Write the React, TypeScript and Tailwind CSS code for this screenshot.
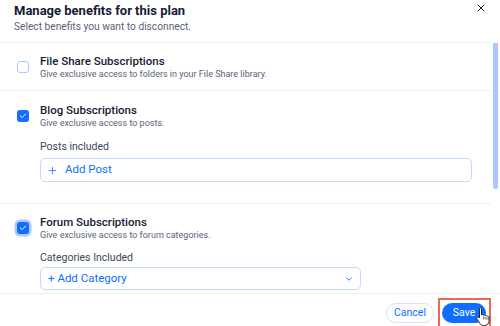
import { Plus, ChevronDown, X, Check } from "lucide-react";

const benefits = [
  {
    title: "File Share Subscriptions",
    desc: "Give exclusive access to folders in your File Share library.",
    checked: false,
  },
];

function Checkbox({ checked, focused }: { checked: boolean; focused?: boolean }) {
  if (!checked) {
    return <div className="w-[12px] h-[12px] rounded-[3px] border-[1.5px] border-[#a8c8ff] bg-white" />;
  }
  return (
    <div
      className={
        "w-[12px] h-[12px] rounded-[3px] bg-[#116dff] flex items-center justify-center" +
        (focused ? " ring-[2.5px] ring-[#a9c9ff]" : "")
      }
    >
      <Check className="w-[8px] h-[8px] text-white" strokeWidth={3} />
    </div>
  );
}

function Row({
  title,
  desc,
  checked,
  focused,
  children,
}: {
  title: string;
  desc: string;
  checked: boolean;
  focused?: boolean;
  children?: React.ReactNode;
}) {
  return (
    <div className="flex gap-[11px] pl-[17px]">
      <div className="pt-[7px]">
        <Checkbox checked={checked} focused={focused} />
      </div>
      <div className="flex-1">
        <div className="text-[11.5px] leading-[14px] font-medium text-[#151b33]">{title}</div>
        <div className="text-[9px] leading-[12px] text-[#5b6279]">{desc}</div>
        {children}
      </div>
    </div>
  );
}

export default function App() {
  return (
    <div
      className="relative w-[500px] h-[326px] bg-white overflow-hidden flex flex-col"
      style={{ fontFamily: "Roboto, 'Noto Sans', sans-serif" }}
    >
      {/* header */}
      <div className="h-[43px] pl-[14px] pt-[1px] border-b border-[#eef0f3] mr-[9px] flex justify-between">
        <div>
          <div className="text-[13px] leading-[19px] font-bold text-[#151b33]">Manage benefits for this plan</div>
          <div className="text-[10.2px] leading-[13px] text-[#5b6279]">Select benefits you want to disconnect.</div>
        </div>
        <X className="w-[12px] h-[12px] text-[#151b33] mt-[1px] mr-[4px]" strokeWidth={2} />
      </div>

      {/* body */}
      <div className="flex-1 flex overflow-hidden">
        <div className="flex-1 flex flex-col">
          {benefits.map((b) => (
            <div key={b.title} className="h-[48px] shrink-0 pt-[11px] border-b border-[#eef0f3]">
              <Row title={b.title} desc={b.desc} checked={b.checked} />
            </div>
          ))}

          <div className="h-[113px] shrink-0 pt-[12px] border-b border-[#eef0f3]">
            <Row title="Blog Subscriptions" desc="Give exclusive access to posts." checked>
              <div className="mt-[11px] text-[10.5px] leading-[13px] text-[#3e4459]">Posts included</div>
              <div className="mt-[5px] mr-[19px] h-[24px] rounded-[5px] border border-[#c4d9ff] flex items-center pl-[6px] gap-[7px] text-[#116dff]">
                <Plus className="w-[11px] h-[11px]" strokeWidth={1.6} />
                <span className="text-[11.5px]">Add Post</span>
              </div>
            </Row>
          </div>

          <div className="pt-[11px]">
            <Row title="Forum Subscriptions" desc="Give exclusive access to forum categories." checked focused>
              <div className="mt-[10px] text-[10.5px] leading-[13px] text-[#3e4459]">Categories Included</div>
              <div className="mt-[3px] w-[321px] h-[23px] rounded-[5px] border-[1.5px] border-[#c4d9ff] flex items-center justify-between pl-[7px] pr-[6px] text-[#116dff]">
                <span className="text-[11.5px]">+ Add Category</span>
                <ChevronDown className="w-[10px] h-[10px]" strokeWidth={2.2} />
              </div>
            </Row>
          </div>
        </div>
        <div className="w-[9px] flex justify-center">
          <div className="w-[5px] h-[150px] mt-[-4px] rounded-full bg-[#a9c8ff]" />
        </div>
      </div>

      {/* footer */}
      <div className="h-[33px] border-t border-[#eef0f3] flex items-start justify-end pt-[9px] pr-[14px] gap-[8px]">
        <button className="h-[20px] w-[48px] rounded-full border border-[#d4e3ff] text-[#116dff] text-[10.5px] flex items-center justify-center">
          Cancel
        </button>
        <div className="relative">
          <button className="h-[20px] w-[44px] rounded-full bg-[#116dff] text-white text-[10.5px] flex items-center justify-center">
            Save
          </button>
          <div className="absolute left-[-4px] top-[-5px] w-[53px] h-[30px] border-2 border-[#ec6a55]" />
          <svg className="absolute left-[33px] top-[3px]" width="17" height="20" viewBox="0 0 17 20">
            <path
              d="M5 1.5c.9 0 1.5.6 1.5 1.5v6l.6-.3c.7-.3 1.5 0 1.8.6.6-.4 1.5-.2 1.9.4.6-.3 1.4 0 1.7.6.8-.2 1.6.4 1.6 1.3v3.2c0 2.6-1.8 4.7-4.4 4.7H8.6c-1.4 0-2.6-.6-3.4-1.7L2 13.2c-.5-.7-.4-1.6.3-2 .6-.4 1.4-.3 1.8.3l.4.5V3c0-.9.5-1.5.5-1.5z"
              fill="white"
              stroke="#222"
              strokeWidth="1"
              strokeLinejoin="round"
            />
            <path d="M8.8 10.5v3M11 11v2.5M13 11.6v2" stroke="#222" strokeWidth="0.8" />
          </svg>
        </div>
      </div>
    </div>
  );
}
